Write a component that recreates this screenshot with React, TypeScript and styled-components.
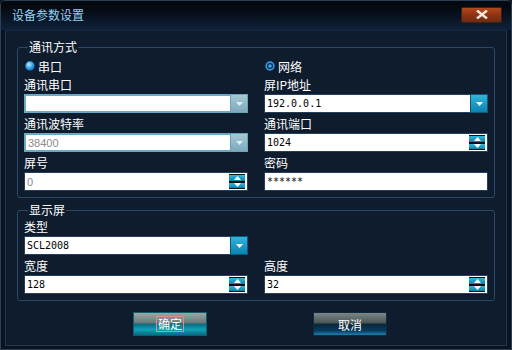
import React from 'react'
import styled, { createGlobalStyle, css } from 'styled-components'

const GlobalStyle = createGlobalStyle`
  html, body {
    margin: 0;
    padding: 0;
    background: #0b1522;
  }
  * {
    box-sizing: border-box;
  }
`

const CJK = `'Noto Sans CJK SC', 'Noto Sans', sans-serif`

const Window = styled.div`
  width: 512px;
  height: 350px;
  display: flex;
  flex-direction: column;
  background: #0a1420;
  border: 1px solid #2c3f55;
  border-radius: 5px 5px 0 0;
  overflow: hidden;
  font-family: ${CJK};
  font-size: 12px;
  color: #ffffff;
`

const TitleBar = styled.div`
  height: 29px;
  flex: none;
  display: flex;
  align-items: center;
  justify-content: space-between;
  padding: 0 9px 0 11px;
  background: linear-gradient(#04080e 0%, #050b14 30%, #0c1a2c 75%, #10213a 100%);
`

const Title = styled.span`
  color: #8fd3f4;
  font-size: 12px;
  line-height: 14px;
  margin-top: -2px;
`

const CloseButton = styled.div`
  width: 41px;
  height: 16px;
  margin-top: -2px;
  display: flex;
  align-items: center;
  justify-content: center;
  border: 1px solid #3a2418;
  border-radius: 2px;
  background: linear-gradient(#b4481c 0%, #8e3312 50%, #6e2a14 100%);
`

const Panel = styled.div`
  flex: 1;
  margin: 0 4px 3px 4px;
  padding: 9px 11px 0 11px;
  background: #0e1c2e;
  border: 1px solid #22374e;
  border-top-color: #16283c;
  display: flex;
  flex-direction: column;
`

const Group = styled.fieldset<{ $height: number; $top: number }>`
  margin: 0;
  height: ${(p) => p.$height}px;
  padding: ${(p) => p.$top}px 6px 0 6px;
  border: 1px solid #2a4866;
  border-radius: 3px;
`

const Legend = styled.legend`
  padding: 0 1px;
  margin-left: 4px;
  line-height: 14px;
  color: #ffffff;
`

const Columns = styled.div`
  display: grid;
  grid-template-columns: 224px 224px;
  column-gap: 16px;
  row-gap: 3px;
`

const RadioRow = styled.div`
  display: flex;
  align-items: center;
  gap: 3px;
  height: 16px;
  padding-left: 1px;
`

const Field = styled.div`
  display: flex;
  flex-direction: column;
  gap: 2px;
`

const Label = styled.div`
  height: 15px;
  line-height: 15px;
`

const Box = styled.div<{ $light?: boolean }>`
  height: 19px;
  display: flex;
  background: #ffffff;
  border: 1px solid ${(p) => (p.$light ? '#68a9c6' : '#233f5c')};
  ${(p) =>
    p.$light &&
    css`
      border-width: 2px;
    `}
`

const Value = styled.div<{ $grey?: boolean }>`
  flex: 1;
  padding-left: 2px;
  display: flex;
  align-items: center;
  ${(p) =>
    p.$grey
      ? css`
          font-family: 'Liberation Sans', sans-serif;
          font-size: 11px;
          color: #8a8a8a;
        `
      : css`
          font-family: 'DejaVu Sans Mono', monospace;
          font-size: 10px;
          color: #000000;
        `}
`

const ComboWrap = styled.div`
  display: flex;
  height: 19px;
  & > ${Box} {
    flex: 1;
    border-right: none;
  }
`

const DropButton = styled.div<{ $disabled?: boolean }>`
  width: 18px;
  height: 19px;
  display: flex;
  align-items: center;
  justify-content: center;
  border: 1px solid ${(p) => (p.$disabled ? '#6fa2b6' : '#0a5a7a')};
  background: ${(p) =>
    p.$disabled
      ? 'linear-gradient(#a7c8d4, #7eaabd)'
      : 'linear-gradient(#2fb4dc, #0e82b0)'};
`

const Spinner = styled.div`
  width: 16px;
  margin: 1px 2px 1px 0;
  display: flex;
  flex-direction: column;
  border-top: 1px solid #111;
  border-bottom: 1px solid #111;
`

const SpinPart = styled.div<{ $down?: boolean }>`
  flex: 1;
  display: flex;
  align-items: center;
  justify-content: center;
  background: linear-gradient(#36b6dc, #0c82ac);
  ${(p) =>
    p.$down &&
    css`
      border-top: 2px solid #111;
    `}
`

const ButtonRow = styled.div`
  display: flex;
  justify-content: flex-start;
  padding: 11px 0 0 116px;
  gap: 106px;
`

const Button = styled.div<{ $primary?: boolean }>`
  width: 74px;
  height: 24px;
  display: flex;
  align-items: center;
  justify-content: center;
  border: 1px solid ${(p) => (p.$primary ? '#0f5d6c' : '#0c2a3e')};
  background: ${(p) =>
    p.$primary
      ? 'linear-gradient(#9aa6a6 0%, #6c7a7a 45%, #0a6a80 50%, #10a0b8 75%, #0a6a82 100%)'
      : 'linear-gradient(#7c8686 0%, #4a5656 45%, #08273c 50%, #0a3a58 80%, #1a80b8 100%)'};
  color: #ffffff;
  font-size: 12px;
`

const FocusText = styled.span`
  border: 1px solid #e48a80;
  padding: 0 1px;
  line-height: 14px;
`

const Arrow = ({ down, light }: { down?: boolean; light?: boolean }) => (
  <svg width="7" height="4" viewBox="0 0 7 4">
    <polygon
      points={down ? '0,0 7,0 3.5,4' : '0,4 7,4 3.5,0'}
      fill={light ? '#e0eef3' : '#ffffff'}
    />
  </svg>
)

const Radio = ({ variant }: { variant: 'ball' | 'ring' }) => (
  <svg width="10" height="10" viewBox="0 0 10 10">
    <defs>
      <radialGradient id={`rg-${variant}`} cx="0.4" cy="0.35" r="0.7">
        <stop offset="0" stopColor="#bfeaff" />
        <stop offset="0.5" stopColor="#3aa8f0" />
        <stop offset="1" stopColor="#0a5fb0" />
      </radialGradient>
    </defs>
    {variant === 'ball' ? (
      <circle cx="5" cy="5" r="4.7" fill={`url(#rg-${variant})`} />
    ) : (
      <>
        <circle cx="5" cy="5" r="4.7" fill="#2a9ae0" />
        <circle cx="5" cy="5" r="3" fill="#0a2440" />
        <circle cx="5" cy="5" r="1.8" fill="#3ab0f0" />
      </>
    )}
  </svg>
)

const Combo = ({ value, disabled, grey }: { value: string; disabled?: boolean; grey?: boolean }) => (
  <ComboWrap>
    <Box $light={disabled}>
      <Value $grey={grey}>{value}</Value>
    </Box>
    <DropButton $disabled={disabled}>
      <Arrow down light={disabled} />
    </DropButton>
  </ComboWrap>
)

const SpinBox = ({ value, grey }: { value: string; grey?: boolean }) => (
  <Box>
    <Value $grey={grey}>{value}</Value>
    <Spinner>
      <SpinPart>
        <Arrow />
      </SpinPart>
      <SpinPart $down>
        <Arrow down />
      </SpinPart>
    </Spinner>
  </Box>
)

const App = () => {
  return (
    <>
      <GlobalStyle />
      <Window>
        <TitleBar>
          <Title>设备参数设置</Title>
          <CloseButton>
            <svg width="12" height="9" viewBox="0 0 12 9">
              <path d="M1 0.5 L11 8.5 M11 0.5 L1 8.5" stroke="#f4e6e0" strokeWidth="2.4" />
            </svg>
          </CloseButton>
        </TitleBar>

        <Panel>
          <Group $height={158} $top={4}>
            <Legend>通讯方式</Legend>
            <Columns>
              <RadioRow>
                <Radio variant="ball" />
                串口
              </RadioRow>
              <RadioRow>
                <Radio variant="ring" />
                网络
              </RadioRow>

              <Field>
                <Label>通讯串口</Label>
                <Combo value="" disabled />
              </Field>
              <Field>
                <Label>屏IP地址</Label>
                <Combo value="192.0.0.1" />
              </Field>

              <Field>
                <Label>通讯波特率</Label>
                <Combo value="38400" disabled grey />
              </Field>
              <Field>
                <Label>通讯端口</Label>
                <SpinBox value="1024" />
              </Field>

              <Field>
                <Label>屏号</Label>
                <SpinBox value="0" grey />
              </Field>
              <Field>
                <Label>密码</Label>
                <Box>
                  <Value>******</Value>
                </Box>
              </Field>
            </Columns>
          </Group>

          <Group $height={98} $top={2} style={{ marginTop: 5 }}>
            <Legend>显示屏</Legend>
            <Columns>
              <Field>
                <Label>类型</Label>
                <Combo value="SCL2008" />
              </Field>
              <div />

              <Field>
                <Label>宽度</Label>
                <SpinBox value="128" />
              </Field>
              <Field>
                <Label>高度</Label>
                <SpinBox value="32" />
              </Field>
            </Columns>
          </Group>

          <ButtonRow>
            <Button $primary>
              <FocusText>确定</FocusText>
            </Button>
            <Button>取消</Button>
          </ButtonRow>
        </Panel>
      </Window>
    </>
  )
}

export default App
